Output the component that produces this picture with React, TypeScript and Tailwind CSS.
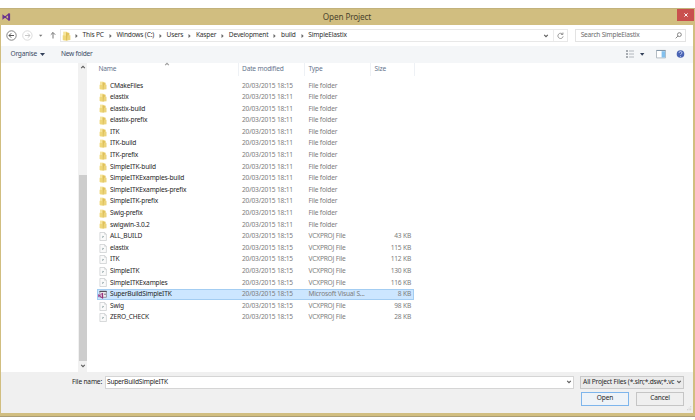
import { Fragment } from "react";
import { clsx } from "clsx";

type Kind = "folder" | "file" | "solution";

const folders: [string, string][] = [
  ["CMakeFiles", "18:15"],
  ["elastix", "18:11"],
  ["elastix-build", "18:11"],
  ["elastix-prefix", "18:11"],
  ["ITK", "18:11"],
  ["ITK-build", "18:11"],
  ["ITK-prefix", "18:11"],
  ["SimpleITK-build", "18:11"],
  ["SimpleITKExamples-build", "18:11"],
  ["SimpleITKExamples-prefix", "18:11"],
  ["SimpleITK-prefix", "18:11"],
  ["Swig-prefix", "18:11"],
  ["swigwin-3.0.2", "18:11"],
];

const files: [string, string][] = [
  ["ALL_BUILD", "43 KB"],
  ["elastix", "115 KB"],
  ["ITK", "112 KB"],
  ["SimpleITK", "130 KB"],
  ["SimpleITKExamples", "116 KB"],
  ["SuperBuildSimpleITK", "8 KB"],
  ["Swig", "98 KB"],
  ["ZERO_CHECK", "28 KB"],
];

const crumbs = ["This PC", "Windows (C:)", "Users", "Kasper", "Development", "build", "SimpleElastix"];

function FolderIcon({ className = "h-[9px] w-[8px]" }: { className?: string }) {
  return (
    <svg viewBox="0 0 8 9" className={className}>
      <path d="M1 .6h3.4v7.8H1z" fill="#f6e59c" />
      <path d="M3.6 1l3 .8v6l-3 .8z" fill="#e4c65f" />
      <path d="M.6 3.8l3 .4v4.4L.6 8z" fill="#efd778" />
      <path d="M5 3.8h2.5v4.4L4 8.6z" fill="#ecd47c" />
      <path d="M4.1 2v6.4" stroke="#d2b250" strokeWidth=".5" />
    </svg>
  );
}

function FileIcon() {
  return (
    <svg viewBox="0 0 8 9" className="h-[9px] w-[8px]" fill="none">
      <path d="M.9.5h4.7L7.4 2.3v6.2H.9z" fill="#fafafa" stroke="#bfc2c4" strokeWidth=".6" />
      <path d="M5.6.5v1.8h1.8" stroke="#bfc2c4" strokeWidth=".5" />
      <path d="M3.2 5.8l1.8-1.6M3.2 4.4h1" stroke="#8fa3a5" strokeWidth=".8" />
    </svg>
  );
}

function SolutionIcon() {
  return (
    <svg viewBox="0 0 9 9" className="-ml-[0.5px] h-[9px] w-[9px]" fill="none">
      <path d="M1.9 1.2h6.5v6.1H1.9z" fill="#f4f0f5" stroke="#77717c" strokeWidth=".7" />
      <path d="M1.5 1.5h7.2" stroke="#55505b" strokeWidth="1.1" />
      <path d="M.6 4.6v2.2l3.6-3.5v4.8z" stroke="#a0388a" strokeWidth=".9" />
      <path d="M4.6 3v5.4" stroke="#943077" strokeWidth="1.1" />
      <path d="M6.3 3.5h1.4v1.4H6.3z" fill="#79717f" />
    </svg>
  );
}

function VsIcon() {
  return (
    <svg viewBox="0 0 9 8" className="mb-px ml-px h-[8px] w-[9px]" fill="none" stroke="#68318f">
      <path d="M1 2.4v3.2L6.8 1v6z" strokeWidth="1.1" />
      <path d="M7.2.6v6.8" strokeWidth="1.8" />
    </svg>
  );
}

function Chevron({ up = false, className = "" }: { up?: boolean; className?: string }) {
  return (
    <svg viewBox="0 0 6 4" className={clsx("h-[4px] w-[6px] shrink-0", up && "rotate-180", className)} fill="none">
      <path d="M1.2.8L3 2.7 4.8.8" stroke="#5c5c5c" strokeWidth="1.1" />
    </svg>
  );
}

function Row({ kind, name, time, type, size }: { kind: Kind; name: string; time: string; type: string; size?: string }) {
  const selected = kind === "solution";
  return (
    <div
      className={clsx(
        "flex h-[11.6px] w-[317px] shrink-0 items-center pl-[2px] text-[#7c7c7c]",
        selected && "bg-[#cce6ff] outline-1 -outline-offset-1 outline-[#a3cdf2]"
      )}
    >
      <div className="flex w-[11.5px] shrink-0 items-center">
        {kind === "folder" ? <FolderIcon /> : kind === "file" ? <FileIcon /> : <SolutionIcon />}
      </div>
      <span className="w-[132px] shrink-0 text-[#262626]">{name}</span>
      <span className="w-[66.5px] shrink-0 tracking-[-0.17px]">20/03/2015 {time}</span>
      <span className="w-[66px] shrink-0">{type}</span>
      <span className="w-[36.5px] shrink-0 text-right">{size}</span>
    </div>
  );
}

function AddressBar() {
  return (
    <div className="flex h-[21px] shrink-0 items-center bg-white pl-[5px] pr-[7px]">
      <svg viewBox="0 0 54 12" className="h-[12px] w-[54px] shrink-0" fill="none">
        <circle cx="5.5" cy="5.5" r="4.7" stroke="#777" strokeWidth=".9" />
        <path d="M8 5.5H3M5.2 3.3L3 5.5l2.2 2.2" stroke="#555" strokeWidth="1" />
        <circle cx="21.4" cy="5.5" r="4.7" stroke="#d2d2d2" strokeWidth=".8" />
        <path d="M19 5.5h5M21.8 3.3L24 5.5l-2.2 2.2" stroke="#c2c2c2" strokeWidth=".9" />
        <path d="M33 4.7h3.4l-1.7 2z" fill="#777" />
        <path d="M47 8.5v-6M44.8 4.7L47 2.5l2.2 2.2" stroke="#777" strokeWidth="1" />
      </svg>
      <div className="flex h-[13px] w-[509px] items-center border border-[#e8e8e8] pl-[1px]">
        <FolderIcon className="h-[10px] w-[9px]" />
        <div className="ml-[3px] flex items-center text-[#303030]">
          {crumbs.map((crumb) => (
            <Fragment key={crumb}>
              <svg viewBox="0 0 3 4" className="ml-[1px] mr-[4.6px] h-[4px] w-[3px]">
                <path d="M.5 0l2.2 2L.5 4z" fill="#666" />
              </svg>
              <span className="mr-[4px]">{crumb}</span>
            </Fragment>
          ))}
        </div>
        <Chevron className="ml-auto mr-[4px]" />
        <div className="flex h-full w-[14px] items-center justify-center border-l border-[#ececec]">
          <svg viewBox="0 0 8 8" className="h-[7px] w-[7px]" fill="none" stroke="#888" strokeWidth="1">
            <path d="M6.5 2.7A3 3 0 1 0 7 5M4.5 2.8h2.3V.6" />
          </svg>
        </div>
      </div>
      <div className="ml-[7px] flex h-[13px] w-[111px] items-center border border-[#e3e3e3] pl-[4.5px] tracking-[-0.22px] text-[#6c6c6c]">
        Search SimpleElastix
        <svg viewBox="0 0 8 8" className="ml-auto mr-[3px] h-[7px] w-[7px]" fill="none" stroke="#777" strokeWidth="1">
          <circle cx="5" cy="3" r="2.2" />
          <path d="M3.4 4.6L.8 7.2" />
        </svg>
      </div>
    </div>
  );
}

function Toolbar() {
  return (
    <div className="flex h-[17px] shrink-0 items-center bg-[#f4f6f8] pl-[9.5px] pr-[8px] text-[#3b4a63]">
      <span className="tracking-[-0.23px]">Organise</span>
      <svg viewBox="0 0 5 3" className="ml-[3px] h-[3px] w-[5px]">
        <path d="M0 0h5L2.5 3z" fill="#33415a" />
      </svg>
      <span className="ml-[16px] tracking-[-0.23px]">New folder</span>
      <svg viewBox="0 0 60 10" className="mb-px ml-auto h-[10px] w-[60px]" fill="none">
        <path d="M1 2h2M1 5h2M1 8h2" stroke="#8d949b" strokeWidth="1.6" />
        <path d="M4 2h5M4 5h5M4 8h5" stroke="#a9afb5" strokeWidth=".9" />
        <path d="M15 4h4.4l-2.2 2.8z" fill="#33415a" />
        <path d="M31.5 1.4h9v7.5h-9z" fill="#fff" stroke="#a3adb6" strokeWidth=".8" />
        <path d="M31.5 1.5h9" stroke="#8296a8" strokeWidth="1" />
        <path d="M36.6 2.2h3.6v6.3h-3.6z" fill="#82c0ee" />
        <circle cx="55.5" cy="5" r="3.8" fill="#4a64b4" />
        <path d="M54 3.9c0-1.8 3-1.8 3 0 0 1-1.5.9-1.5 2M55.5 7v.8" stroke="#dce5ff" strokeWidth=".8" />
      </svg>
    </div>
  );
}

function FileList() {
  return (
    <div className="flex h-[308.5px] shrink-0 bg-white">
      <div className="w-[77px] shrink-0" />
      <div className="flex w-[9px] shrink-0 flex-col items-center bg-[#f1f1f1]">
        <Chevron up className="mt-[2px]" />
        <div className="mt-[106px] h-[186px] w-[8px] bg-[#cdcdcd]" />
        <Chevron className="mt-[3px]" />
      </div>
      <div className="ml-[9.5px] flex flex-col">
        <div className="flex h-[17px] shrink-0 items-start text-[#66748c]">
          <span className="flex h-[13px] w-[142px] items-center border-r border-[#eef1f5] pl-[2px]">
            Name
            <Chevron up className="mb-[12px] ml-[48px] h-[3px] w-[4px] opacity-60" />
          </span>
          <span className="flex h-[13px] w-[66px] items-center border-r border-[#eef1f5] pl-[3.5px]">Date modified</span>
          <span className="flex h-[13px] w-[66px] items-center border-r border-[#eef1f5] pl-[4px]">Type</span>
          <span className="flex h-[13px] w-[44.5px] items-center border-r border-[#eef1f5] pl-[4px]">Size</span>
        </div>
        {folders.map(([name, time]) => (
          <Row key={name} kind="folder" name={name} time={time} type="File folder" />
        ))}
        {files.map(([name, size]) => {
          const solution = name === "SuperBuildSimpleITK";
          return (
            <Row
              key={name}
              kind={solution ? "solution" : "file"}
              name={name}
              time="18:15"
              type={solution ? "Microsoft Visual S..." : "VCXPROJ File"}
              size={size}
            />
          );
        })}
      </div>
    </div>
  );
}

function Footer() {
  return (
    <div className="flex h-[41px] shrink-0 flex-col bg-[#f0f0f0] pt-[4px] text-[#262626]">
      <div className="flex h-[13px] items-center pr-[9px]">
        <span className="w-[104px] shrink-0 pr-[3px] text-right">File name:</span>
        <div className="flex h-[13px] w-[469.5px] items-center justify-between border border-[#d5d5d5] bg-white pl-[1px] pr-[1px] tracking-[-0.22px]">
          SuperBuildSimpleITK
          <Chevron />
        </div>
        <div className="ml-[6px] flex h-[13px] w-[104px] items-center justify-between border border-[#c9c9c9] bg-[#ebebeb] pl-[2px] pr-[1px]">
          <span>All Project Files (*.sln;*.dsw;*.vc</span>
          <Chevron />
        </div>
      </div>
      <div className="mt-[3px] flex justify-end gap-[7px] pr-[9px]">
        <button className="h-[14px] w-[48px] border border-[#7db5ec] bg-[#eef3f8]">Open</button>
        <button className="h-[14px] w-[48px] border border-[#c5c5c5] bg-[#efefef]">Cancel</button>
      </div>
      <svg viewBox="0 0 6 6" className="ml-auto mr-px h-[5px] w-[5px]" fill="#c3c3c3">
        <path d="M4 0h1v1H4zM2 2h1v1H2zM4 2h1v1H4zM0 4h1v1H0zM2 4h1v1H2zM4 4h1v1H4z" />
      </svg>
    </div>
  );
}

export default function App() {
  return (
    <div className="h-[420px] w-[695px] overflow-hidden bg-white pt-[8px] font-['Noto_Sans','Open_Sans',sans-serif] text-[6.6px] leading-none tracking-[-0.18px] whitespace-nowrap">
      <div className="flex h-[409px] flex-col border-b border-[#aa9d74] bg-[#d1be80]">
        <div className="flex h-[17px] shrink-0 items-center border-t border-[#c2b27c] pl-[1px]">
          <VsIcon />
          <span className="flex-1 pl-[6px] text-center text-[8.2px] tracking-[-0.14px] text-[#4a432d]">Open Project</span>
          <div className="mr-px flex h-[12px] w-[17px] items-center justify-center self-start bg-[#c9504e]">
            <svg viewBox="0 0 5 5" className="h-[4px] w-[4px]" stroke="#fff" strokeWidth="1.2">
              <path d="M.5.5l4 4M4.5.5l-4 4" />
            </svg>
          </div>
        </div>
        <div className="ml-px mr-[2px] flex flex-col">
          <AddressBar />
          <Toolbar />
          <FileList />
          <Footer />
        </div>
      </div>
    </div>
  );
}
